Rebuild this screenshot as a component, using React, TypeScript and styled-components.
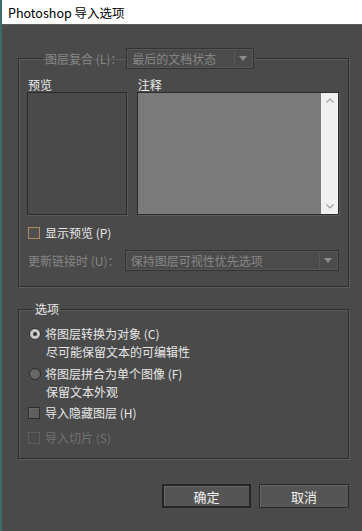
import React from "react";
import styled, { createGlobalStyle } from "styled-components";

const Global = createGlobalStyle`
  html, body { margin: 0; padding: 0; background: #4a4a4a; }
  body { font-family: "Noto Sans CJK SC", "Noto Sans", sans-serif; font-size: 12px; }
`;

const Window = styled.div`
  width: 362px;
  height: 531px;
  display: flex;
  flex-direction: column;
  background: #4a4a4a;
  box-sizing: border-box;
  border-left: 2px solid #3f6a6a;
  overflow: hidden;
`;

const TitleBar = styled.div`
  height: 25px;
  flex: none;
  background: #ffffff;
  color: #000;
  display: flex;
  align-items: center;
  padding-left: 8px;
  margin-left: -2px;
  font-size: 12.5px;
  border-bottom: 1px solid #5a5a5a;
  box-sizing: border-box;
`;

const Body = styled.div`
  flex: 1;
  display: flex;
  flex-direction: column;
  padding: 23px 13px 0 16px;
`;

const Group = styled.fieldset<{ $mt?: number }>`
  margin: ${(p) => p.$mt ?? 0}px 0 0 0;
  padding: ${(p) => (p.$mt ? "9px 9px 11px 8px" : "9px 9px 15px 8px")};
  border: 1px solid #2f2f2f;
  box-shadow: inset 1px 1px 0 #5c5c5c, 1px 1px 0 #5c5c5c;
  min-width: 0;
  display: flex;
  flex-direction: column;
`;

const Legend = styled.legend<{ $ml: number }>`
  margin-left: ${(p) => p.$ml}px;
  padding: 0 2px;
  display: flex;
  align-items: center;
  gap: 4px;
  line-height: 14px;
  color: #e8e8e8;
`;

const Text = styled.span<{ $disabled?: boolean }>`
  color: ${(p) => (p.$disabled ? "#878787" : "#e8e8e8")};
  line-height: 14px;
  white-space: nowrap;
`;

const Select = styled.div<{ $w: number }>`
  width: ${(p) => p.$w}px;
  height: 21px;
  box-sizing: border-box;
  border: 1px solid #343434;
  box-shadow: inset 0 0 0 1px #565656;
  background: #4b4b4b;
  display: flex;
  align-items: center;
  color: #878787;
  padding-left: 5px;
`;

const SelectText = styled.span`
  flex: 1;
  white-space: nowrap;
`;

const SelectArrow = styled.span`
  width: 16px;
  height: 15px;
  margin-right: 2px;
  border-left: 1px solid #5a5a5a;
  display: flex;
  align-items: center;
  justify-content: center;
`;

const Columns = styled.div`
  display: flex;
  gap: 10px;
`;

const Column = styled.div<{ $w: number }>`
  width: ${(p) => p.$w}px;
  display: flex;
  flex-direction: column;
`;

const ColLabel = styled.div`
  color: #ececec;
  line-height: 14px;
  height: 14px;
  padding-left: 1px;
`;

const PreviewBox = styled.div`
  height: 123px;
  box-sizing: border-box;
  border: 1px solid #2b2b2b;
  box-shadow: 1px 1px 0 #5a5a5a;
  background: #4a4a4a;
`;

const NotesBox = styled.div`
  height: 123px;
  box-sizing: border-box;
  border: 1px solid #2b2b2b;
  box-shadow: 1px 1px 0 #5a5a5a;
  background: #7a7a7a;
  display: flex;
  justify-content: flex-end;
`;

const Scrollbar = styled.div`
  width: 17px;
  background: #f0f0f0;
  display: flex;
  flex-direction: column;
  justify-content: space-between;
  align-items: center;
  padding: 5px 0;
`;

const Row = styled.div<{ $mt: number; $h?: number }>`
  margin-top: ${(p) => p.$mt}px;
  height: ${(p) => p.$h ?? 14}px;
  display: flex;
  align-items: center;
`;

const Check = styled.span<{ $variant: "focus" | "normal" | "disabled" }>`
  width: 12px;
  height: 12px;
  box-sizing: border-box;
  flex: none;
  margin-left: 1px;
  margin-right: 5px;
  border: 1px solid
    ${(p) => (p.$variant === "focus" ? "#b08a5c" : p.$variant === "disabled" ? "#5e5e5e" : "#2e2e2e")};
  background: ${(p) => (p.$variant === "normal" ? "#5f5f5f" : p.$variant === "focus" ? "#4f4f4f" : "#4a4a4a")};
  box-shadow: ${(p) => (p.$variant === "normal" ? "inset 1px 1px 0 #6c6c6c" : "none")};
`;

const Radio = styled.span<{ $checked?: boolean }>`
  width: 12px;
  height: 12px;
  box-sizing: border-box;
  flex: none;
  margin-left: 2px;
  margin-right: 4px;
  border-radius: 50%;
  border: 1px solid #2c2c2c;
  background: ${(p) => (p.$checked ? "#c9c9c9" : "#676767")};
  display: flex;
  align-items: center;
  justify-content: center;
  &::after {
    content: "";
    width: 4px;
    height: 4px;
    border-radius: 50%;
    background: #333;
    display: ${(p) => (p.$checked ? "block" : "none")};
  }
`;

const Options = styled.div`
  display: flex;
  flex-direction: column;
`;

const OptionLine = styled.div<{ $mt?: number; $indent?: boolean }>`
  margin-top: ${(p) => p.$mt ?? 0}px;
  height: 18px;
  display: flex;
  align-items: center;
  padding-left: ${(p) => (p.$indent ? 19 : 0)}px;
`;

const Buttons = styled.div`
  margin-top: 25px;
  display: flex;
  justify-content: flex-end;
  gap: 8px;
  padding-right: 0px;
`;

const Button = styled.button<{ $default?: boolean; $w: number }>`
  width: ${(p) => p.$w}px;
  height: 24px;
  box-sizing: border-box;
  font-family: inherit;
  font-size: 13px;
  color: #f2f2f2;
  background: #555555;
  border: ${(p) => (p.$default ? "2px solid #262626" : "1px solid #2a2a2a")};
  box-shadow: inset 1px 1px 0 #666;
  padding: 0;
  cursor: pointer;
`;

const Arrow = () => (
  <svg width="8" height="5" viewBox="0 0 8 5">
    <path d="M0 0 L8 0 L4 5 Z" fill="#8c8c8c" />
  </svg>
);

const Chevron = ({ up }: { up?: boolean }) => (
  <svg width="8" height="5" viewBox="0 0 8 5">
    <path d={up ? "M0.5 4.5 L4 1 L7.5 4.5" : "M0.5 0.5 L4 4 L7.5 0.5"} fill="none" stroke="#a0a0a0" strokeWidth="1.2" />
  </svg>
);

export default function App() {
  return (
    <>
      <Global />
      <Window>
        <TitleBar>Photoshop 导入选项</TitleBar>
        <Body>
          <Group>
            <Legend $ml={16}>
              <Text $disabled>图层复合 (L)：</Text>
              <Select $w={128}>
                <SelectText>最后的文档状态</SelectText>
                <SelectArrow>
                  <Arrow />
                </SelectArrow>
              </Select>
            </Legend>
            <Columns>
              <Column $w={100}>
                <ColLabel>预览</ColLabel>
                <PreviewBox />
              </Column>
              <Column $w={203}>
                <ColLabel>注释</ColLabel>
                <NotesBox>
                  <Scrollbar>
                    <Chevron up />
                    <Chevron />
                  </Scrollbar>
                </NotesBox>
              </Column>
            </Columns>
            <Row $mt={11}>
              <Check $variant="focus" />
              <Text>显示预览 (P)</Text>
            </Row>
            <Row $mt={10} $h={21}>
              <Text $disabled style={{ marginLeft: 1, width: 97 }}>更新链接时 (U)：</Text>
              <Select $w={215}>
                <SelectText>保持图层可视性优先选项</SelectText>
                <SelectArrow>
                  <Arrow />
                </SelectArrow>
              </Select>
            </Row>
          </Group>
          <Group $mt={15}>
            <Legend $ml={6}>
              <Text>选项</Text>
            </Legend>
            <Options>
              <OptionLine>
                <Radio $checked />
                <Text>将图层转换为对象 (C)</Text>
              </OptionLine>
              <OptionLine $indent>
                <Text>尽可能保留文本的可编辑性</Text>
              </OptionLine>
              <OptionLine $mt={4}>
                <Radio />
                <Text>将图层拼合为单个图像 (F)</Text>
              </OptionLine>
              <OptionLine $indent>
                <Text>保留文本外观</Text>
              </OptionLine>
              <OptionLine $mt={3}>
                <Check $variant="normal" />
                <Text>导入隐藏图层 (H)</Text>
              </OptionLine>
              <OptionLine $mt={7}>
                <Check $variant="disabled" />
                <Text $disabled style={{ color: "#737373" }}>导入切片 (S)</Text>
              </OptionLine>
            </Options>
          </Group>
          <Buttons>
            <Button $default $w={89}>确定</Button>
            <Button $w={90}>取消</Button>
          </Buttons>
        </Body>
      </Window>
    </>
  );
}
